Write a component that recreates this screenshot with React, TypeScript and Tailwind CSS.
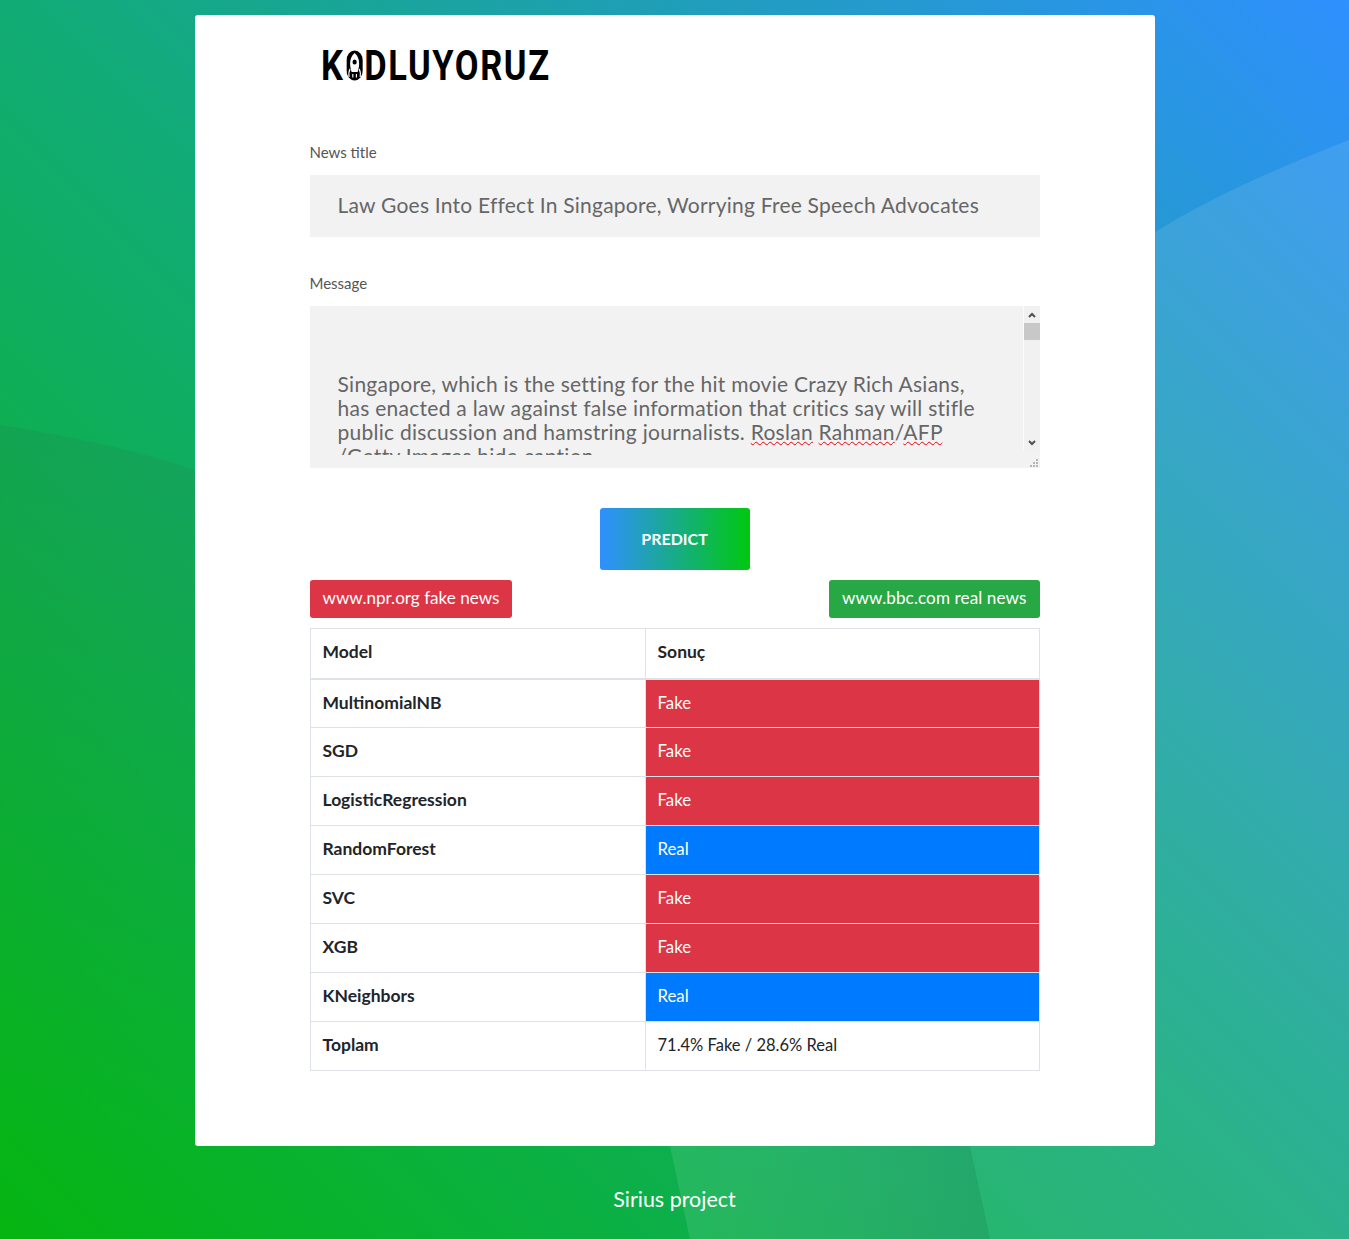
const rows = [
  { model: "MultinomialNB", result: "Fake" },
  { model: "SGD", result: "Fake" },
  { model: "LogisticRegression", result: "Fake" },
  { model: "RandomForest", result: "Real" },
  { model: "SVC", result: "Fake" },
  { model: "XGB", result: "Fake" },
  { model: "KNeighbors", result: "Real" },
];

const Rocket = () => (
  <svg width="20" height="31" viewBox="0 0 20 31" className="mx-[2px] shrink-0">
    <rect x="0" y="0.5" width="20" height="30" rx="10" fill="#000" />
    <path d="M10 3c3.500 2.500 5.500 6 5.500 10.500 0 3-.8 6-1.800 8.500H6.300C5.300 19.500 4.500 16.500 4.500 13.500 4.500 9 6.500 5.500 10 3z" fill="#fff" />
    <circle cx="10" cy="12" r="2.600" fill="#000" />
    <path d="M4.500 19c-1.500 2-1.800 5-1.300 8M15.500 19c1.500 2 1.800 5 1.300 8M7.800 24v3.500M12.200 24v3.500" stroke="#fff" strokeWidth="1.400" fill="none" />
  </svg>
);

export default function App() {
  return (
    <div className="relative min-h-[1239px] overflow-hidden bg-[linear-gradient(45deg,#05b510_0%,#12ab7a_50%,#2f90ff_100%)] font-['Lato',sans-serif]">
      <svg className="absolute inset-0" width="1349" height="1239" viewBox="0 0 1349 1239">
        <defs>
          <linearGradient id="leftShade" x1="0" y1="425" x2="0" y2="1150" gradientUnits="userSpaceOnUse">
            <stop offset="0" stopColor="#444" stopOpacity="0.1" />
            <stop offset="1" stopColor="#444" stopOpacity="0" />
          </linearGradient>
          <linearGradient id="bottomShade" x1="670" y1="0" x2="985" y2="0" gradientUnits="userSpaceOnUse">
            <stop offset="0" stopColor="#fff" stopOpacity="0.1" />
            <stop offset="1" stopColor="#888" stopOpacity="0.16" />
          </linearGradient>
        </defs>
        <path d="M0 425C70 436 135 450 195 470V1239H0Z" fill="url(#leftShade)" />
        <path d="M1155 232C1215 195 1285 165 1349 140V1239H990L970 1146H1155Z" fill="#fff" fillOpacity="0.1" />
        <path d="M670 1146H970L990 1239H690Z" fill="url(#bottomShade)" />
      </svg>

      <div className="relative mx-auto w-[960px] pt-[15px]">
        <div className="h-[1131px] rounded-[3px] bg-white px-[115px]">
          <div className="flex h-[115px] items-center pb-[15px] pl-[11px]">
            <div className="flex h-[32px] origin-left scale-x-[0.82] items-center text-[42px] font-bold tracking-[2px] text-black font-['Roboto',sans-serif]">
              <span>K</span>
              <Rocket />
              <span>DLUYORUZ</span>
            </div>
          </div>

          <label className="block pt-[14px] text-[15px] leading-[17px] text-[#555]">News title</label>
          <div className="mt-[14px] flex h-[62px] items-center bg-[#f2f2f2] px-[28px] pb-[2px] text-[21px] tracking-[0.23px] text-[#666]">
            Law Goes Into Effect In Singapore, Worrying Free Speech Advocates
          </div>

          <label className="mt-[38px] block text-[15px] leading-[17px] text-[#555]">Message</label>
          <div className="mt-[14px] flex h-[162px] bg-[#f2f2f2]">
            <div className="h-[149px] flex-1 overflow-hidden pl-[28px] pr-[30px] pt-[66px] text-[21px] leading-[24px] tracking-[0.27px] text-[#666]">
              Singapore, which is the setting for the hit movie Crazy Rich Asians, has enacted a law against false information that critics say will stifle public discussion and hamstring journalists.{" "}
              <span className="underline decoration-wavy decoration-red-600 decoration-1">Roslan</span>{" "}
              <span className="underline decoration-wavy decoration-red-600 decoration-1">Rahman</span>/
              <span className="underline decoration-wavy decoration-red-600 decoration-1">AFP</span>{" "}
              /Getty Images hide caption
            </div>
            <div className="flex w-[17px] flex-col">
              <div className="flex h-[145px] flex-col border-l border-white/70 bg-[#f1f1f1]">
                <div className="flex h-[17px] items-center justify-center">
                  <svg width="8" height="6" viewBox="0 0 8 6"><path d="M1 5l3-3 3 3" stroke="#505050" strokeWidth="2" fill="none" /></svg>
                </div>
                <div className="h-[17px] bg-[#c8c8c8]" />
                <div className="flex-1" />
                <div className="flex h-[17px] items-center justify-center">
                  <svg width="8" height="6" viewBox="0 0 8 6"><path d="M1 1l3 3 3-3" stroke="#505050" strokeWidth="2" fill="none" /></svg>
                </div>
              </div>
              <div className="flex flex-1 items-end justify-end pb-[1px] pr-[2px]">
                <svg width="8" height="8" viewBox="0 0 8 8" fill="#b5b5b5">
                  <rect x="6" y="0" width="2" height="2" />
                  <rect x="3" y="3" width="2" height="2" />
                  <rect x="6" y="3" width="2" height="2" />
                  <rect x="0" y="6" width="2" height="2" />
                  <rect x="3" y="6" width="2" height="2" />
                  <rect x="6" y="6" width="2" height="2" />
                </svg>
              </div>
            </div>
          </div>

          <div className="mt-[40px] flex justify-center">
            <button className="h-[62px] w-[150px] rounded-[3px] bg-[linear-gradient(90deg,#2f90ff,#00c80f)] pb-[1px] text-[16px] font-bold text-white">
              PREDICT
            </button>
          </div>

          <div className="mt-[10px] flex justify-between">
            <a className="flex h-[38px] items-center rounded-[3px] bg-[#dc3545] px-[13px] pb-[2px] text-[17.1px] text-white">www.npr.org fake news</a>
            <a className="flex h-[38px] items-center rounded-[3px] bg-[#28a745] px-[13px] pb-[2px] text-[17.1px] tracking-[0.1px] text-white">www.bbc.com real news</a>
          </div>

          <table className="mt-[10px] w-full table-fixed border-collapse text-[16.8px] text-[#212529]">
            <thead>
              <tr className="h-[50px]">
                <th className="w-[335px] border border-b-2 border-[#dee2e6] px-[12px] pb-[3px] text-left text-[17.5px] font-bold">Model</th>
                <th className="border border-b-2 border-[#dee2e6] px-[12px] pb-[3px] text-left text-[17.5px] font-bold">Sonuç</th>
              </tr>
            </thead>
            <tbody>
              {rows.map((row) => (
                <tr key={row.model} className="h-[49px]">
                  <th className="border border-[#dee2e6] px-[12px] pb-[1px] text-left text-[17.5px] font-bold">{row.model}</th>
                  <td className={`border border-[#dee2e6] px-[12px] pb-[2px] text-white ${row.result === "Fake" ? "bg-[#dc3545]" : "bg-[#007bff]"}`}>{row.result}</td>
                </tr>
              ))}
              <tr className="h-[49px]">
                <th className="border border-[#dee2e6] px-[12px] pb-[1px] text-left text-[17.5px] font-bold">Toplam</th>
                <td className="border border-[#dee2e6] px-[12px] pb-[1px] text-[16.5px]">71.4% Fake / 28.6% Real</td>
              </tr>
            </tbody>
          </table>
        </div>

        <div className="flex h-[93px] items-center justify-center pt-[14px] text-[21.5px] text-white">Sirius project</div>
      </div>
    </div>
  );
}
